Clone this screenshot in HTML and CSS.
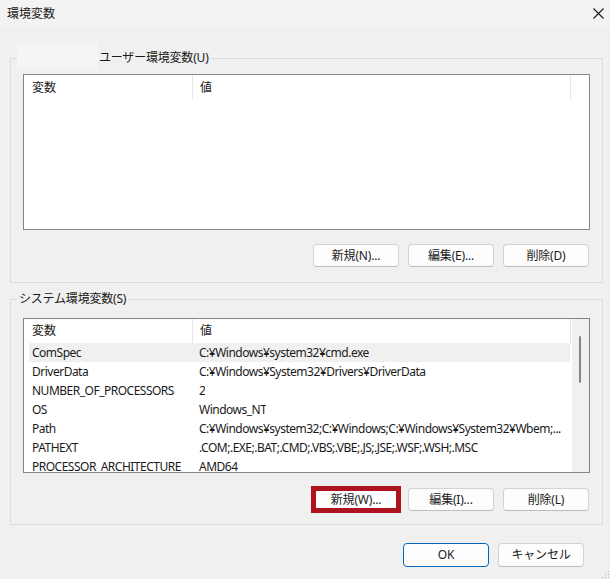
FILE: index.html
```html
<!DOCTYPE html>
<html lang="ja">
<head>
    <meta charset="UTF-8">
    <meta name="viewport" content="width=device-width, initial-scale=1.0">
    <title>環境変数</title>
    <link rel="stylesheet" href="styles.css">
</head>
<body>
    <div class="dialog-window">
        <div class="titlebar">
            <span class="title">環境変数</span>
            <svg class="close-icon" width="11" height="11" viewBox="0 0 11 11">
                <path d="M0.5 0.5 L10.5 10.5 M10.5 0.5 L0.5 10.5" stroke="#1a1a1a" stroke-width="1.1" fill="none"/>
            </svg>
        </div>

        <fieldset class="group group-user">
            <legend><span class="redacted"></span>ユーザー環境変数(U)</legend>
            <div class="group-body">
                <div class="list list-user">
                    <div class="list-main">
                        <div class="list-header">
                            <div class="col-name">変数</div>
                            <div class="col-value">値</div>
                        </div>
                    </div>
                </div>
                <div class="button-row">
                    <div class="button">新規(N)...</div>
                    <div class="button">編集(E)...</div>
                    <div class="button">削除(D)</div>
                </div>
            </div>
        </fieldset>

        <fieldset class="group group-system">
            <legend>システム環境変数(S)</legend>
            <div class="group-body">
                <div class="list list-system">
                    <div class="list-main">
                        <div class="list-header">
                            <div class="col-name">変数</div>
                            <div class="col-value">値</div>
                        </div>
                        <div class="rows">
                            <div class="row hover"><div class="cell-name">ComSpec</div><div class="cell-value">C:¥Windows¥system32¥cmd.exe</div></div>
                            <div class="row"><div class="cell-name">DriverData</div><div class="cell-value">C:¥Windows¥System32¥Drivers¥DriverData</div></div>
                            <div class="row"><div class="cell-name">NUMBER_OF_PROCESSORS</div><div class="cell-value">2</div></div>
                            <div class="row"><div class="cell-name">OS</div><div class="cell-value">Windows_NT</div></div>
                            <div class="row"><div class="cell-name">Path</div><div class="cell-value">C:¥Windows¥system32;C:¥Windows;C:¥Windows¥System32¥Wbem;...</div></div>
                            <div class="row"><div class="cell-name">PATHEXT</div><div class="cell-value">.COM;.EXE;.BAT;.CMD;.VBS;.VBE;.JS;.JSE;.WSF;.WSH;.MSC</div></div>
                            <div class="row"><div class="cell-name">PROCESSOR_ARCHITECTURE</div><div class="cell-value">AMD64</div></div>
                        </div>
                    </div>
                    <div class="scrollbar">
                        <div class="scroll-thumb"></div>
                    </div>
                </div>
                <div class="button-row">
                    <div class="button marked">新規(W)...</div>
                    <div class="button">編集(I)...</div>
                    <div class="button">削除(L)</div>
                </div>
            </div>
        </fieldset>

        <div class="footer">
            <div class="button default-button">OK</div>
            <div class="button">キャンセル</div>
            <svg class="grip" width="26" height="10" viewBox="0 0 26 10">
                <rect x="24" y="2" width="1" height="1" fill="#b5b5b5"/>
                <rect x="21" y="5" width="1" height="1" fill="#b5b5b5"/>
                <rect x="24" y="5" width="1" height="1" fill="#b5b5b5"/>
                <rect x="18" y="8" width="1" height="1" fill="#b5b5b5"/>
                <rect x="21" y="8" width="1" height="1" fill="#b5b5b5"/>
                <rect x="24" y="8" width="1" height="1" fill="#b5b5b5"/>
            </svg>
        </div>
    </div>
</body>
</html>
```

FILE: styles.css
```css
* {
    margin: 0;
    padding: 0;
    box-sizing: border-box;
}

body {
    background-color: #F0F0F0;
    font-family: 'Noto Sans', 'Noto Sans CJK JP', sans-serif;
    font-size: 12px;
    color: #1a1a1a;
    width: 610px;
    height: 579px;
    overflow: hidden;
}

.dialog-window {
    display: flex;
    flex-direction: column;
    height: 100%;
}

.titlebar {
    height: 27px;
    background-color: #F3F3F3;
    display: flex;
    align-items: center;
    justify-content: space-between;
    padding: 0 6px 0 7px;
    user-select: none;
}

.title {
    font-size: 12px;
    line-height: 16px;
}

.close-icon {
    display: block;
    margin-top: -1px;
}

/* group boxes */
.group {
    border: 1px solid #DCDCDC;
    margin: 0 7px 0 10px;
    padding: 0;
    min-width: 0;
}

.group-user {
    margin-top: 23px;
}

.group-system {
    margin-top: 8px;
}

.group legend {
    margin-left: 6px;
    padding: 0 2px;
    line-height: 16px;
    font-size: 12px;
    letter-spacing: -0.2px;
}

.redacted {
    display: inline-block;
    width: 81px;
    height: 26px;
    margin: -10px 1px -4px -2px;
    vertical-align: middle;
    background-color: #F5F5F5;
}

.group-body {
    padding: 8px 12px 15px;
}

.group-system .group-body {
    padding: 11px 12px 13px;
}

/* list views */
.list {
    display: flex;
    background-color: white;
    border: 1px solid #848484;
    overflow: hidden;
}

.list-user {
    height: 156px;
}

.list-system {
    height: 155px;
}

.list-main {
    flex: 1;
    min-width: 0;
}

.list-header {
    display: flex;
    height: 24px;
    line-height: 25px;
}

.list-system .list-header {
    line-height: 24px;
}

.col-name {
    width: 169px;
    padding-left: 8px;
    border-right: 1px solid #E5E5E5;
}

.col-value {
    width: 378px;
    padding-left: 7px;
    border-right: 1px solid #E5E5E5;
}

.rows {
    padding: 0 2px 0 5px;
    letter-spacing: -0.5px;
}

.row {
    display: flex;
    height: 19px;
    line-height: 19px;
    white-space: nowrap;
}

.row.hover {
    background-color: #F0F0F0;
}

.cell-name {
    width: 163px;
    padding-left: 3px;
    flex-shrink: 0;
}

.cell-value {
    padding-left: 7px;
    overflow: hidden;
}

.scrollbar {
    width: 17px;
    background-color: #F0F0F0;
    flex-shrink: 0;
}

.scroll-thumb {
    width: 2px;
    height: 47px;
    margin: 17px 0 0 7px;
    background-color: #868686;
    border-radius: 1px;
}

/* buttons */
.button-row {
    display: flex;
    justify-content: flex-end;
    gap: 9px;
    margin-top: 14px;
    padding-right: 1px;
}

.group-system .button-row {
    margin-top: 15px;
}

.button {
    width: 86px;
    height: 23px;
    line-height: 22px;
    text-align: center;
    background-color: #FDFDFD;
    border: 1px solid #D3D3D3;
    border-bottom-color: #BDBDBD;
    border-radius: 4px;
    font-size: 12px;
    letter-spacing: -0.2px;
    user-select: none;
}

.button.marked {
    outline: 5px solid #AD1420;
    outline-offset: -3px;
    border-radius: 0;
}

.footer {
    display: flex;
    justify-content: flex-end;
    gap: 9px;
    margin-top: 18px;
    flex: 1;
}

.footer .button {
    height: 24px;
    line-height: 22px;
    width: 86px;
}

.default-button {
    border: 1px solid #0067C0;
}

.grip {
    align-self: flex-end;
    margin-left: -9px;
    display: block;
}
```
